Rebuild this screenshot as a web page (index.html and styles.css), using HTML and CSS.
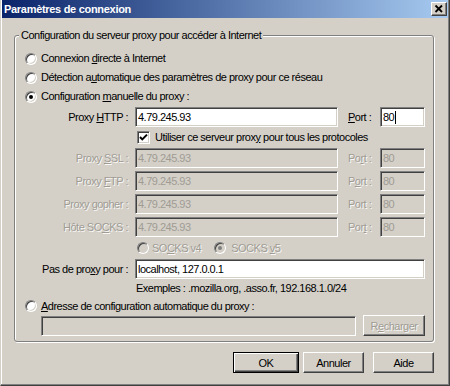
FILE: index.html
```html
<!DOCTYPE html>
<html lang="fr">
<head>
<meta charset="utf-8">
<title>Paramètres de connexion</title>
<link rel="stylesheet" href="styles.css">
</head>
<body>
<div class="window">
  <div class="titlebar">
    <span class="title">Paramètres de connexion</span>
    <span class="close"><svg width="14" height="12" viewBox="0 0 14 12"><path d="M3.5 2.5 L10 9 M10 2.5 L3.5 9" stroke="#000" stroke-width="1.8" fill="none"/></svg></span>
  </div>
  <div class="body">
    <fieldset class="group">
      <legend class="legend">Configuration du serveur proxy pour accéder à Internet</legend>
      <div class="group-content">
        <div class="row opt"><span class="radio"></span><span class="txt">Connexion <u>d</u>irecte à Internet</span></div>
        <div class="row opt"><span class="radio"></span><span class="txt">Détection a<u>u</u>tomatique des paramètres de proxy pour ce réseau</span></div>
        <div class="row opt"><span class="radio on"></span><span class="txt">Configuration <u>m</u>anuelle du proxy :</span></div>

        <div class="row field first">
          <span class="lbl">Proxy <u>H</u>TTP :</span>
          <span class="input main">4.79.245.93</span>
          <span class="plbl"><u>P</u>ort :</span>
          <span class="input port">80<span class="caret"></span></span>
        </div>
        <div class="row check-row">
          <span class="check"><svg width="11" height="11" viewBox="0 0 11 11"><path d="M2 5 L4.3 7.4 L9 2.6" stroke="#000" stroke-width="2" fill="none"/></svg></span>
          <span class="txt">Utiliser ce serveur prox<u>y</u> pour tous les protocoles</span>
        </div>
        <div class="row field dis">
          <span class="lbl">Proxy <u>S</u>SL :</span>
          <span class="input main off">4.79.245.93</span>
          <span class="plbl">Po<u>r</u>t :</span>
          <span class="input port off">80</span>
        </div>
        <div class="row field dis gap">
          <span class="lbl">Proxy <u>F</u>TP :</span>
          <span class="input main off">4.79.245.93</span>
          <span class="plbl">P<u>o</u>rt :</span>
          <span class="input port off">80</span>
        </div>
        <div class="row field dis gap">
          <span class="lbl">Proxy <u>g</u>opher :</span>
          <span class="input main off">4.79.245.93</span>
          <span class="plbl">Port :</span>
          <span class="input port off">80</span>
        </div>
        <div class="row field dis gap">
          <span class="lbl">Hôte SO<u>C</u>KS :</span>
          <span class="input main off">4.79.245.93</span>
          <span class="plbl">Por<u>t</u> :</span>
          <span class="input port off">80</span>
        </div>
        <div class="row socks dis">
          <span class="radio off"></span><span class="txt">SO<u>C</u>KS v4</span>
          <span class="radio off on second"></span><span class="txt">SOCKS <u>v</u>5</span>
        </div>
        <div class="row field">
          <span class="lbl">Pas de pro<u>x</u>y pour :</span>
          <span class="input wide">localhost, 127.0.0.1</span>
        </div>
        <div class="row examples"><span class="txt">Exemples : .mozilla.org, .asso.fr, 192.168.1.0/24</span></div>
        <div class="row opt auto"><span class="radio"></span><span class="txt"><u>A</u>dresse de configuration automatique du proxy :</span></div>
        <div class="row autocfg">
          <span class="input url off"></span>
          <span class="btn reload dis">R<u>e</u>charger</span>
        </div>
      </div>
    </fieldset>
    <div class="buttons">
      <span class="btn default ok">OK</span>
      <span class="btn cancel">Annuler</span>
      <span class="btn help">Aide</span>
    </div>
  </div>
</div>
</body>
</html>
```

FILE: styles.css
```css
* { box-sizing: border-box; }
html, body { margin: 0; padding: 0; }
body {
  width: 450px;
  height: 386px;
  overflow: hidden;
  background: #d4d0c8;
  font-family: "Liberation Sans", Arial, sans-serif;
  font-size: 11px;
  letter-spacing: -0.5px;
  color: #000;
}
u { text-decoration: underline; text-underline-offset: 1px; }

.window {
  width: 450px;
  height: 386px;
  background: #d4d0c8;
  border-left: 1px solid #d4d0c8;
  border-right: 1px solid #404040;
  border-bottom: 1px solid #404040;
  box-shadow: inset -1px -1px 0 #808080, inset 1px 0 0 #ffffff;
}

.titlebar {
  height: 18px;
  margin: 0 1px 0 1px;
  background: linear-gradient(to right, #0a246a, #a6caf0);
  display: flex;
  align-items: center;
  justify-content: space-between;
  padding: 0 1px 0 2px;
}
.title {
  color: #fff;
  font-weight: bold;
  font-size: 11px;
  letter-spacing: -0.3px;
  line-height: 13px;
  padding-top: 1px;
}
.close {
  width: 16px;
  height: 14px;
  background: #d4d0c8;
  border: 1px solid;
  border-color: #fff #404040 #404040 #fff;
  box-shadow: inset -1px -1px 0 #808080;
  display: flex;
  align-items: center;
  justify-content: center;
}
.close svg { display: block; }

.body {
  padding: 11px 15px 0 13px;
}

.group {
  margin: 0;
  padding: 0 0 5px 0;
  border: 1px solid #808080;
  border-radius: 3px;
  box-shadow: 1px 1px 0 #ffffff, inset 1px 1px 0 #ffffff;
  min-width: 0;
}
.legend {
  margin-left: 4px;
  padding: 0 2px;
  line-height: 13px;
  background: #d4d0c8;
}
.group-content {
  padding: 7px 8px 0 10px;
  display: flex;
  flex-direction: column;
}

.row { display: flex; align-items: center; }
.opt { height: 19px; }
.txt { line-height: 13px; white-space: nowrap; }
.opt .radio { margin-right: 4px; }

.radio {
  flex: none;
  width: 12px;
  height: 12px;
  border-radius: 50%;
  border: 1px solid;
  border-color: #808080 #fff #fff #808080;
  background: #fff;
  box-shadow: inset 1px 1px 0 #404040, inset -1px -1px 0 #d4d0c8;
  display: flex;
  align-items: center;
  justify-content: center;
}
.radio.on::after {
  content: "";
  width: 4px;
  height: 4px;
  border-radius: 50%;
  background: #000;
}
.radio.off { background: #d4d0c8; }
.radio.off.on::after { background: #808080; }

.field { height: 20px; }
.field.first { margin-top: 1px; }
.field.gap { margin-top: 3px; }
.lbl {
  width: 103px;
  flex: none;
  text-align: right;
  white-space: nowrap;
  margin-right: 7px;
}
.plbl {
  width: 32px;
  flex: none;
  margin-left: 10px;
  white-space: nowrap;
}
.dis .lbl, .dis .plbl, .dis .txt, .btn.dis {
  color: #a09c94;
  text-shadow: 1px 1px 0 rgba(255,255,255,0.85);
}

.input {
  height: 20px;
  flex: none;
  display: flex;
  align-items: center;
  padding-left: 2px;
  background: #fff;
  border: 1px solid;
  border-color: #808080 #fff #fff #808080;
  box-shadow: inset 1px 1px 0 #404040, inset -1px -1px 0 #d4d0c8;
  white-space: nowrap;
}
.input.off { background: #d4d0c8; color: #a09c94; }
.input.main { width: 203px; }
.input.port { width: 45px; }
.input.wide { flex: 1; }
.caret {
  width: 1px;
  height: 13px;
  background: #000;
  margin-left: 1px;
}

.check-row { height: 21px; padding-left: 112px; }
.check {
  flex: none;
  width: 13px;
  height: 13px;
  margin-right: 5px;
  background: #fff;
  border: 1px solid;
  border-color: #808080 #fff #fff #808080;
  box-shadow: inset 1px 1px 0 #404040, inset -1px -1px 0 #d4d0c8;
  display: flex;
  align-items: center;
  justify-content: center;
}
.check svg { display: block; }

.socks { height: 22px; padding-left: 112px; }
.socks .radio { margin-right: 3px; }
.socks .radio.second { margin-left: 13px; margin-right: 5px; }

.examples { height: 18px; padding-left: 111px; }
.auto { height: 18px; }

.autocfg { height: 21px; padding-left: 16px; }
.input.url { width: 315px; }

.btn {
  flex: none;
  height: 21px;
  background: #d4d0c8;
  border: 1px solid;
  border-color: #fff #404040 #404040 #fff;
  box-shadow: inset -1px -1px 0 #808080;
  display: flex;
  align-items: center;
  justify-content: center;
  white-space: nowrap;
}
.btn.reload { width: 62px; margin-left: 7px; }

.buttons {
  display: flex;
  justify-content: flex-end;
  margin-top: 10px;
  margin-right: 0;
}
.btn.default {
  border-color: #000;
  box-shadow: inset 1px 1px 0 #fff, inset -1px -1px 0 #404040, inset -2px -2px 0 #808080;
}
.btn.ok { width: 66px; }
.btn.cancel { width: 61px; margin-left: 4px; }
.btn.help { width: 61px; margin-left: 9px; }
```
